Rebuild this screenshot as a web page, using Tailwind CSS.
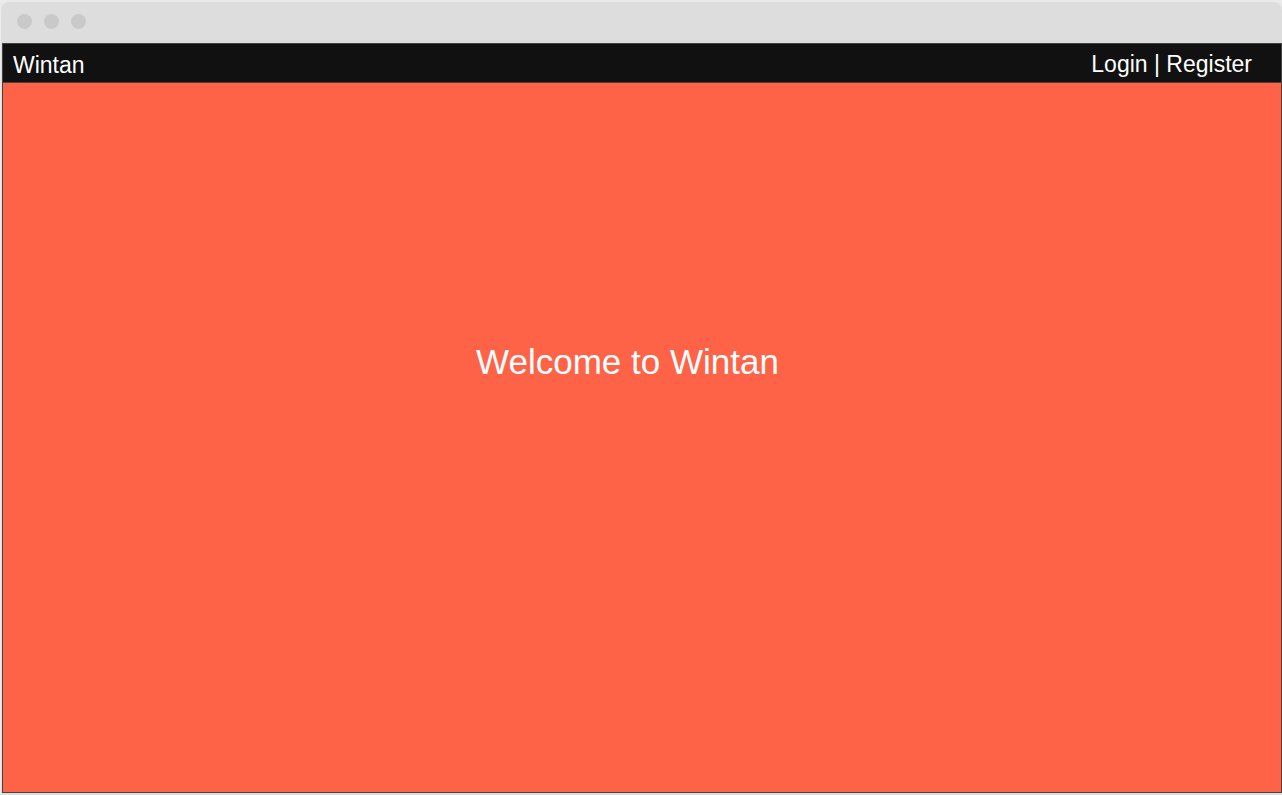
<!DOCTYPE html>
<html lang="en">
<head>
<meta charset="utf-8">
<meta name="viewport" content="width=device-width, initial-scale=1">
<title>Wintan</title>
<script src="https://cdn.jsdelivr.net/npm/@tailwindcss/browser@4"></script>
</head>
<body class="flex h-screen flex-col bg-[#ebebeb] pt-0.5 pl-px font-['Liberation_Sans',Arial,sans-serif] text-white">
  <div class="flex min-h-0 grow flex-col rounded-t-lg bg-[#dddddd] pb-0.5 pl-px">
    <div class="flex h-[41px] shrink-0 items-center gap-3 px-[15px] pb-0.5" aria-hidden="true">
      <span class="size-[15px] rounded-full bg-[#c9c9c9]"></span>
      <span class="size-[15px] rounded-full bg-[#c9c9c9]"></span>
      <span class="size-[15px] rounded-full bg-[#c9c9c9]"></span>
    </div>
    <div class="flex min-h-0 grow flex-col border border-[#444444] bg-[#ff6347]">
      <header class="flex h-[39px] shrink-0 items-center justify-between border-b border-[#444444] bg-[#111111] pr-[29px] pl-2.5 text-[23px] leading-7">
        <a href="#" class="pt-1">Wintan</a>
        <nav class="whitespace-pre pt-0.5" aria-label="Account"><a href="#login">Login</a> | <a href="#register">Register</a></nav>
      </header>
      <main class="flex grow items-center justify-center pr-[29px] pb-[152px]">
        <h1 class="text-[35px] leading-10">Welcome to Wintan</h1>
      </main>
    </div>
  </div>
</body>
</html>
